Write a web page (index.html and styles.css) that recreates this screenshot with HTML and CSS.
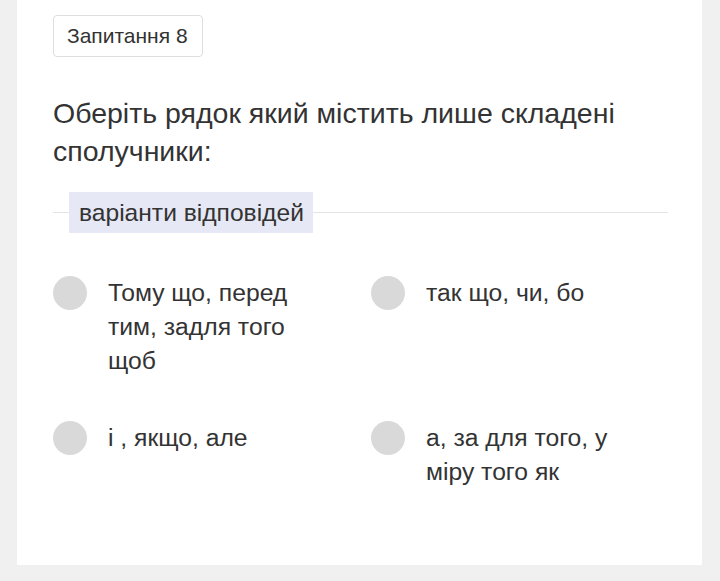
FILE: index.html
```html
<!DOCTYPE html>
<html lang="uk">
<head>
<meta charset="utf-8">
<link rel="stylesheet" href="styles.css">
</head>
<body>
<div class="card">
  <div class="badge">Запитання 8</div>
  <div class="question">Оберіть рядок який містить лише складені сполучники:</div>
  <div class="divider">
    <span class="line short"></span>
    <span class="label">варіанти відповідей</span>
    <span class="line"></span>
  </div>
  <div class="options">
    <div class="option"><span class="radio"></span><span class="text">Тому що, перед тим, задля того щоб</span></div>
    <div class="option"><span class="radio"></span><span class="text">так що, чи, бо</span></div>
    <div class="option"><span class="radio"></span><span class="text">і , якщо, але</span></div>
    <div class="option"><span class="radio"></span><span class="text">а, за для того, у міру того як</span></div>
  </div>
</div>
</body>
</html>
```
FILE: styles.css
```css
html, body {
  margin: 0;
  padding: 0;
}
body {
  background: #f0f0f0;
  font-family: "Liberation Sans", Arial, sans-serif;
  color: #333;
}
.card {
  background: #fff;
  margin-left: 17px;
  width: 685px;
  box-sizing: border-box;
  padding: 15px 34px 76px 36px;
  margin-bottom: 16px;
}
.badge {
  display: inline-block;
  height: 42px;
  box-sizing: border-box;
  line-height: 40px;
  padding: 0 14px 0 13px;
  border: 1px solid #dedede;
  border-radius: 4px;
  font-size: 21px;
  color: #333;
}
.question {
  margin-top: 37px;
  font-size: 28.5px;
  line-height: 38px;
  color: #333;
}
.divider {
  margin-top: 22px;
  display: flex;
  align-items: center;
}
.line {
  flex: 1;
  height: 1px;
  background: #e4e4e4;
}
.line.short {
  flex: 0 0 16px;
}
.label {
  background: #e6e8f5;
  height: 41px;
  line-height: 41px;
  padding: 0 9px 0 10px;
  font-size: 24.6px;
  color: #333;
}
.options {
  margin-top: 43px;
  display: grid;
  grid-template-columns: 318px 1fr;
  row-gap: 43px;
}
.option {
  display: flex;
  align-items: flex-start;
  gap: 21px;
}
.radio {
  flex: 0 0 34px;
  height: 34px;
  border-radius: 50%;
  background: #d9d9d9;
}
.text {
  max-width: 210px;
  font-size: 24.7px;
  line-height: 34px;
  color: #333;
}
```
